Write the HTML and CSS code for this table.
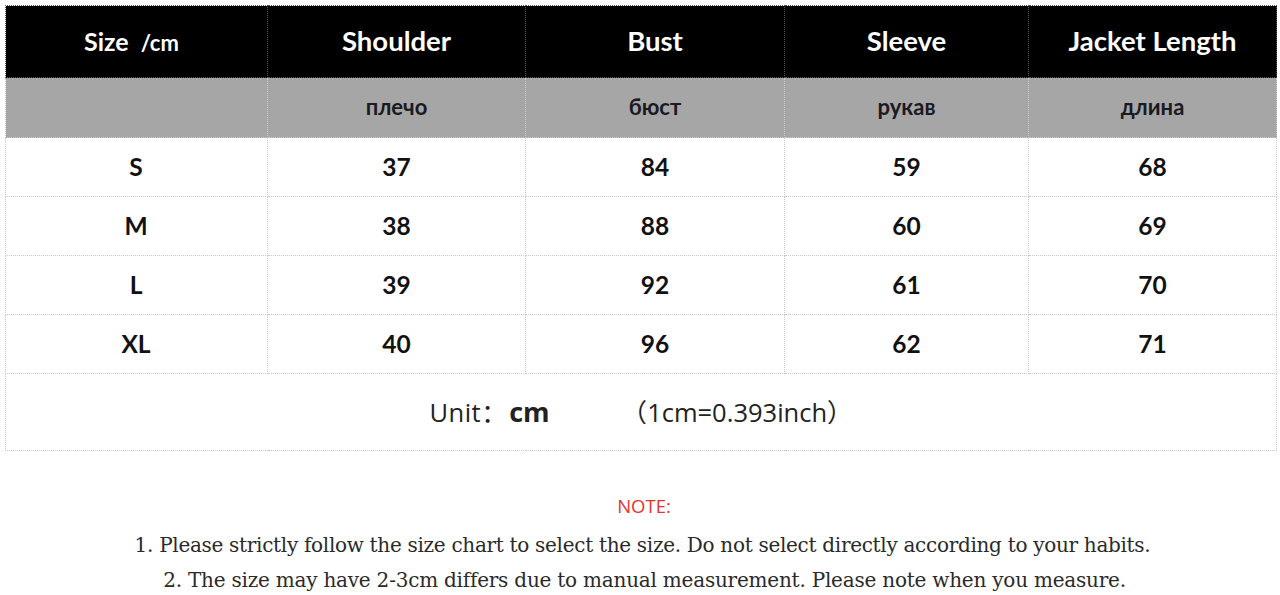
FILE: index.html
```html
<!DOCTYPE html>
<html>
<head>
<meta charset="utf-8">
<link rel="stylesheet" href="styles.css">
</head>
<body>
<div class="page">
  <table class="chart">
    <colgroup>
      <col class="c1"><col class="c2"><col class="c3"><col class="c4"><col class="c5">
    </colgroup>
    <tr class="head">
      <th><span class="size">Size</span><span class="unit">/cm</span></th>
      <th>Shoulder</th>
      <th>Bust</th>
      <th>Sleeve</th>
      <th class="last">Jacket Length</th>
    </tr>
    <tr class="ru">
      <td></td>
      <td>плечо</td>
      <td>бюст</td>
      <td>рукав</td>
      <td>длина</td>
    </tr>
    <tr class="data"><td>S</td><td>37</td><td>84</td><td>59</td><td>68</td></tr>
    <tr class="data"><td>M</td><td>38</td><td>88</td><td>60</td><td>69</td></tr>
    <tr class="data"><td>L</td><td>39</td><td>92</td><td>61</td><td>70</td></tr>
    <tr class="data"><td>XL</td><td>40</td><td>96</td><td>62</td><td>71</td></tr>
    <tr class="unitrow">
      <td colspan="5"><span class="u1">Unit<span class="fw">：</span></span><span class="u2">cm</span><span class="u3"><span class="fw">（</span>1cm=0.393inch<span class="fw">）</span></span></td>
    </tr>
  </table>
  <div class="notes">
    <div class="note-title">NOTE:</div>
    <p class="l1">1. Please strictly follow the size chart to select the size. Do not select directly according to your habits.</p>
    <p class="l2">2. The size may have 2-3cm differs due to manual measurement. Please note when you measure.</p>
  </div>
</div>
</body>
</html>
```

FILE: styles.css
```css
html, body {
  margin: 0;
  padding: 0;
  background: #ffffff;
}
.page {
  width: 1280px;
  height: 595px;
  overflow: hidden;
  padding: 5px 0 0 5px;
  box-sizing: border-box;
}
.chart {
  border-collapse: collapse;
  table-layout: fixed;
  width: 1271px;
  font-family: Lato, "Open Sans", sans-serif;
}
.c1 { width: 262px; }
.c2 { width: 258px; }
.c3 { width: 259px; }
.c4 { width: 244px; }
.c5 { width: 248px; }
.chart th, .chart td {
  border: 1px dotted #c8c8c8;
  text-align: center;
  padding: 0;
}
.head th {
  background: #000;
  color: #fff;
  height: 68px;
  font-size: 27.5px;
  font-weight: 700;
  border-color: #555;
  padding-bottom: 3px;
}
.head th:first-child { text-align: left; padding-left: 78px; }
.size { font-size: 25px; }
.unit { font-size: 22px; margin-left: 12px; }
.ru td {
  background: #a6a6a6;
  height: 56px;
  font-size: 22px;
  font-weight: 700;
  color: #1a1a22;
  border-color: #c9c9c9;
  padding-bottom: 3px;
}
.data td {
  height: 57px;
  font-size: 24.5px;
  font-weight: 700;
  color: #111;
  padding-bottom: 1px;
}
.data td:first-child { padding-right: 1px; }
.unitrow td {
  height: 73px;
  font-size: 25.5px;
  color: #222;
  font-family: "Open Sans", "Noto Sans CJK SC", sans-serif;
  padding-bottom: 3px;
}
.fw { font-family: "Noto Sans CJK SC", sans-serif; }
.u1 { margin-right: 2px; letter-spacing: 0.5px; }
.u2 { font-weight: 700; font-size: 27px; margin-right: 72px; }
.notes {
  text-align: center;
  margin-top: 42px;
}
.note-title {
  color: #e0352f;
  font-family: "Open Sans", sans-serif;
  font-size: 18.5px;
  margin-left: 3px;
  height: 28px;
}
.notes p {
  margin: 0;
  font-family: "DejaVu Serif", "Liberation Serif", serif;
  font-size: 20px;
  color: #2a2a2a;
  letter-spacing: -0.3px;
}
.l1 { margin-top: 12px !important; height: 35px; }
.l2 { padding-left: 4px; letter-spacing: -0.22px !important; }
```
